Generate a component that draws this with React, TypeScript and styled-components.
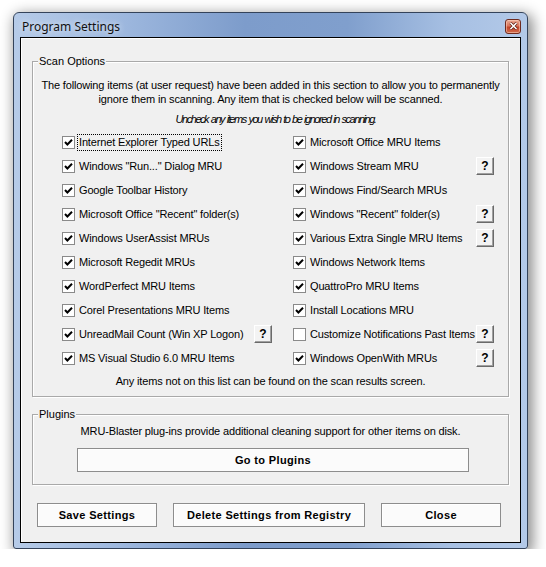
import React from 'react';
import styled, { createGlobalStyle } from 'styled-components';

const Global = createGlobalStyle`
  html, body { margin: 0; padding: 0; background: #ffffff; }
  body { font-family: "Liberation Sans", Arial, sans-serif; font-size: 11px; color: #000; }
`;

const Page = styled.div`
  padding: 12px 0 0 13px;
`;

const Window = styled.div`
  width: 515px;
  height: 537px;
  box-sizing: border-box;
  border: 1px solid #34435a;
  border-radius: 6px 6px 3px 3px;
  background: linear-gradient(90deg, #b6cbe8 0%, #9fb9df 20%, #7d9ccb 45%, #809fcd 65%, #a7c0e3 85%, #b3c9e8 100%);
  box-shadow: 3px 4px 14px 2px rgba(0, 0, 0, 0.45);
  display: flex;
  flex-direction: column;
  padding: 0 6px 5px;
`;

const TitleBar = styled.div`
  height: 24px;
  display: flex;
  align-items: center;
  justify-content: space-between;
  padding-left: 2px;
`;

const Title = styled.span`
  font-family: "Noto Sans", "Open Sans", sans-serif;
  font-size: 12px;
  color: #111;
  padding-top: 2px;
  text-shadow: 0 0 6px rgba(255, 255, 255, 0.9);
`;

const CloseBtn = styled.div`
  width: 16px;
  height: 15px;
  margin-top: 2px;
  box-sizing: border-box;
  border: 1px solid #6e2a1f;
  border-radius: 3px;
  background: linear-gradient(180deg, #eaa994 0%, #d9765c 45%, #c4452a 55%, #cf6a4c 100%);
  box-shadow: inset 0 0 0 1px rgba(255, 220, 200, 0.5);
  display: flex;
  align-items: center;
  justify-content: center;
`;

const Client = styled.div`
  flex: 1;
  box-sizing: border-box;
  border: 1px solid #000;
  background: #f0f0f0;
  box-shadow: inset 1px 1px 0 #ffffff;
  display: flex;
  flex-direction: column;
  padding: 0 11px 0 11px;
`;

const Group = styled.div<{ $top: number; $pt: number; $pb: number }>`
  position: relative;
  margin-top: ${(p) => p.$top}px;
  width: 477px;
  box-sizing: border-box;
  border: 1px solid #a9a9a9;
  box-shadow: inset 1px 1px 0 #ffffff, 1px 1px 0 #ffffff;
  padding: ${(p) => p.$pt}px 0 ${(p) => p.$pb}px;
  display: flex;
  flex-direction: column;
`;

const Legend = styled.span`
  position: absolute;
  top: -7px;
  left: 5px;
  padding: 0 1px;
  background: #f0f0f0;
  line-height: 13px;
`;

const Centered = styled.div<{ $mt?: number }>`
  text-align: center;
  line-height: 14px;
  margin-top: ${(p) => p.$mt ?? 0}px;
  letter-spacing: -0.15px;
  white-space: nowrap;
`;

const Hint = styled.div`
  text-align: center;
  line-height: 14px;
  margin-top: 6px;
  font-style: italic;
  letter-spacing: -1.45px;
  word-spacing: 1px;
  white-space: nowrap;
  padding-left: 10px;
`;

const Grid = styled.div`
  display: grid;
  grid-template-columns: 210px 201px;
  column-gap: 21px;
  grid-auto-rows: 24px;
  margin-top: 4px;
  padding-left: 29px;
`;

const Row = styled.div`
  display: flex;
  align-items: center;
`;

const Box = styled.span`
  width: 13px;
  height: 13px;
  box-sizing: border-box;
  border: 1px solid #8a8a8a;
  background: #fff;
  flex: none;
  display: flex;
  align-items: center;
  justify-content: center;
`;

const Label = styled.span<{ $focus?: boolean }>`
  margin-left: ${(p) => (p.$focus ? 2 : 4)}px;
  padding: ${(p) => (p.$focus ? '1px 1px' : '0')};
  border: ${(p) => (p.$focus ? '1px dotted #000' : 'none')};
  white-space: nowrap;
  letter-spacing: -0.15px;
  line-height: 13px;
`;

const Help = styled.button`
  margin-left: auto;
  width: 18px;
  height: 18px;
  box-sizing: border-box;
  padding: 0;
  background: #f3f3f3;
  border: 1px solid;
  border-color: #ffffff #6a6a6a #6a6a6a #ffffff;
  box-shadow: inset -1px -1px 0 #a0a0a0;
  font-family: "Liberation Sans", Arial, sans-serif;
  font-weight: bold;
  font-size: 12px;
  color: #000;
  line-height: 16px;
`;

const PushButton = styled.button<{ $w: number }>`
  width: ${(p) => p.$w}px;
  height: 24px;
  box-sizing: border-box;
  background: #fbfbfb;
  border: 1px solid #8d8d8d;
  box-shadow: inset 1px 1px 0 #ffffff;
  font-family: "Liberation Sans", Arial, sans-serif;
  font-weight: bold;
  font-size: 11px;
  letter-spacing: 0.35px;
  color: #000;
  padding: 0;
`;

const PluginButtonRow = styled.div`
  margin-top: 10px;
  padding-left: 44px;
  display: flex;
`;

const ButtonBar = styled.div`
  margin-top: 18px;
  padding-left: 5px;
  display: flex;
  gap: 16px;
`;

type Item = { label: string; checked: boolean; help?: boolean };

const left: Item[] = [
  { label: 'Internet Explorer Typed URLs', checked: true },
  { label: 'Windows "Run..." Dialog MRU', checked: true },
  { label: 'Google Toolbar History', checked: true },
  { label: 'Microsoft Office "Recent" folder(s)', checked: true },
  { label: 'Windows UserAssist MRUs', checked: true },
  { label: 'Microsoft Regedit MRUs', checked: true },
  { label: 'WordPerfect MRU Items', checked: true },
  { label: 'Corel Presentations MRU Items', checked: true },
  { label: 'UnreadMail Count (Win XP Logon)', checked: true, help: true },
  { label: 'MS Visual Studio 6.0 MRU Items', checked: true },
];

const right: Item[] = [
  { label: 'Microsoft Office MRU Items', checked: true },
  { label: 'Windows Stream MRU', checked: true, help: true },
  { label: 'Windows Find/Search MRUs', checked: true },
  { label: 'Windows "Recent" folder(s)', checked: true, help: true },
  { label: 'Various Extra Single MRU Items', checked: true, help: true },
  { label: 'Windows Network Items', checked: true },
  { label: 'QuattroPro MRU Items', checked: true },
  { label: 'Install Locations MRU', checked: true },
  { label: 'Customize Notifications Past Items', checked: false, help: true },
  { label: 'Windows OpenWith MRUs', checked: true, help: true },
];

const Check = ({ on }: { on: boolean }) => (
  <Box>
    {on && (
      <svg width="9" height="9" viewBox="0 0 9 9">
        <path d="M1 4 L3.4 6.5 L8 1.8" fill="none" stroke="#000" strokeWidth="2" />
      </svg>
    )}
  </Box>
);

const CheckRow = ({ item, focus }: { item: Item; focus?: boolean }) => (
  <Row>
    <Check on={item.checked} />
    <Label $focus={focus}>{item.label}</Label>
    {item.help && <Help>?</Help>}
  </Row>
);

export default function App() {
  const cells: React.ReactNode[] = [];
  for (let i = 0; i < left.length; i++) {
    cells.push(<CheckRow key={'l' + i} item={left[i]} focus={i === 0} />);
    cells.push(<CheckRow key={'r' + i} item={right[i]} />);
  }
  return (
    <>
      <Global />
      <Page>
        <Window>
          <TitleBar>
            <Title>Program Settings</Title>
            <CloseBtn>
              <svg width="9" height="8" viewBox="0 0 9 8">
                <path d="M1.5 1 L7.5 7 M7.5 1 L1.5 7" stroke="#5a1d12" strokeWidth="3" />
                <path d="M1.5 1 L7.5 7 M7.5 1 L1.5 7" stroke="#ffffff" strokeWidth="1.6" />
              </svg>
            </CloseBtn>
          </TitleBar>
          <Client>
            <Group $top={23} $pt={16} $pb={8}>
              <Legend>Scan Options</Legend>
              <Centered>
                The following items (at user request) have been added in this section to allow you to permanently
              </Centered>
              <Centered>ignore them in scanning. Any item that is checked below will be scanned.</Centered>
              <Hint>Uncheck any items you wish to be ignored in scanning.</Hint>
              <Grid>{cells}</Grid>
              <Centered $mt={4}>Any items not on this list can be found on the scan results screen.</Centered>
            </Group>
            <Group $top={17} $pt={9} $pb={12}>
              <Legend>Plugins</Legend>
              <Centered>MRU-Blaster plug-ins provide additional cleaning support for other items on disk.</Centered>
              <PluginButtonRow>
                <PushButton $w={392}>Go to Plugins</PushButton>
              </PluginButtonRow>
            </Group>
            <ButtonBar>
              <PushButton $w={120}>Save Settings</PushButton>
              <PushButton $w={192}>Delete Settings from Registry</PushButton>
              <PushButton $w={120}>Close</PushButton>
            </ButtonBar>
          </Client>
        </Window>
      </Page>
    </>
  );
}
